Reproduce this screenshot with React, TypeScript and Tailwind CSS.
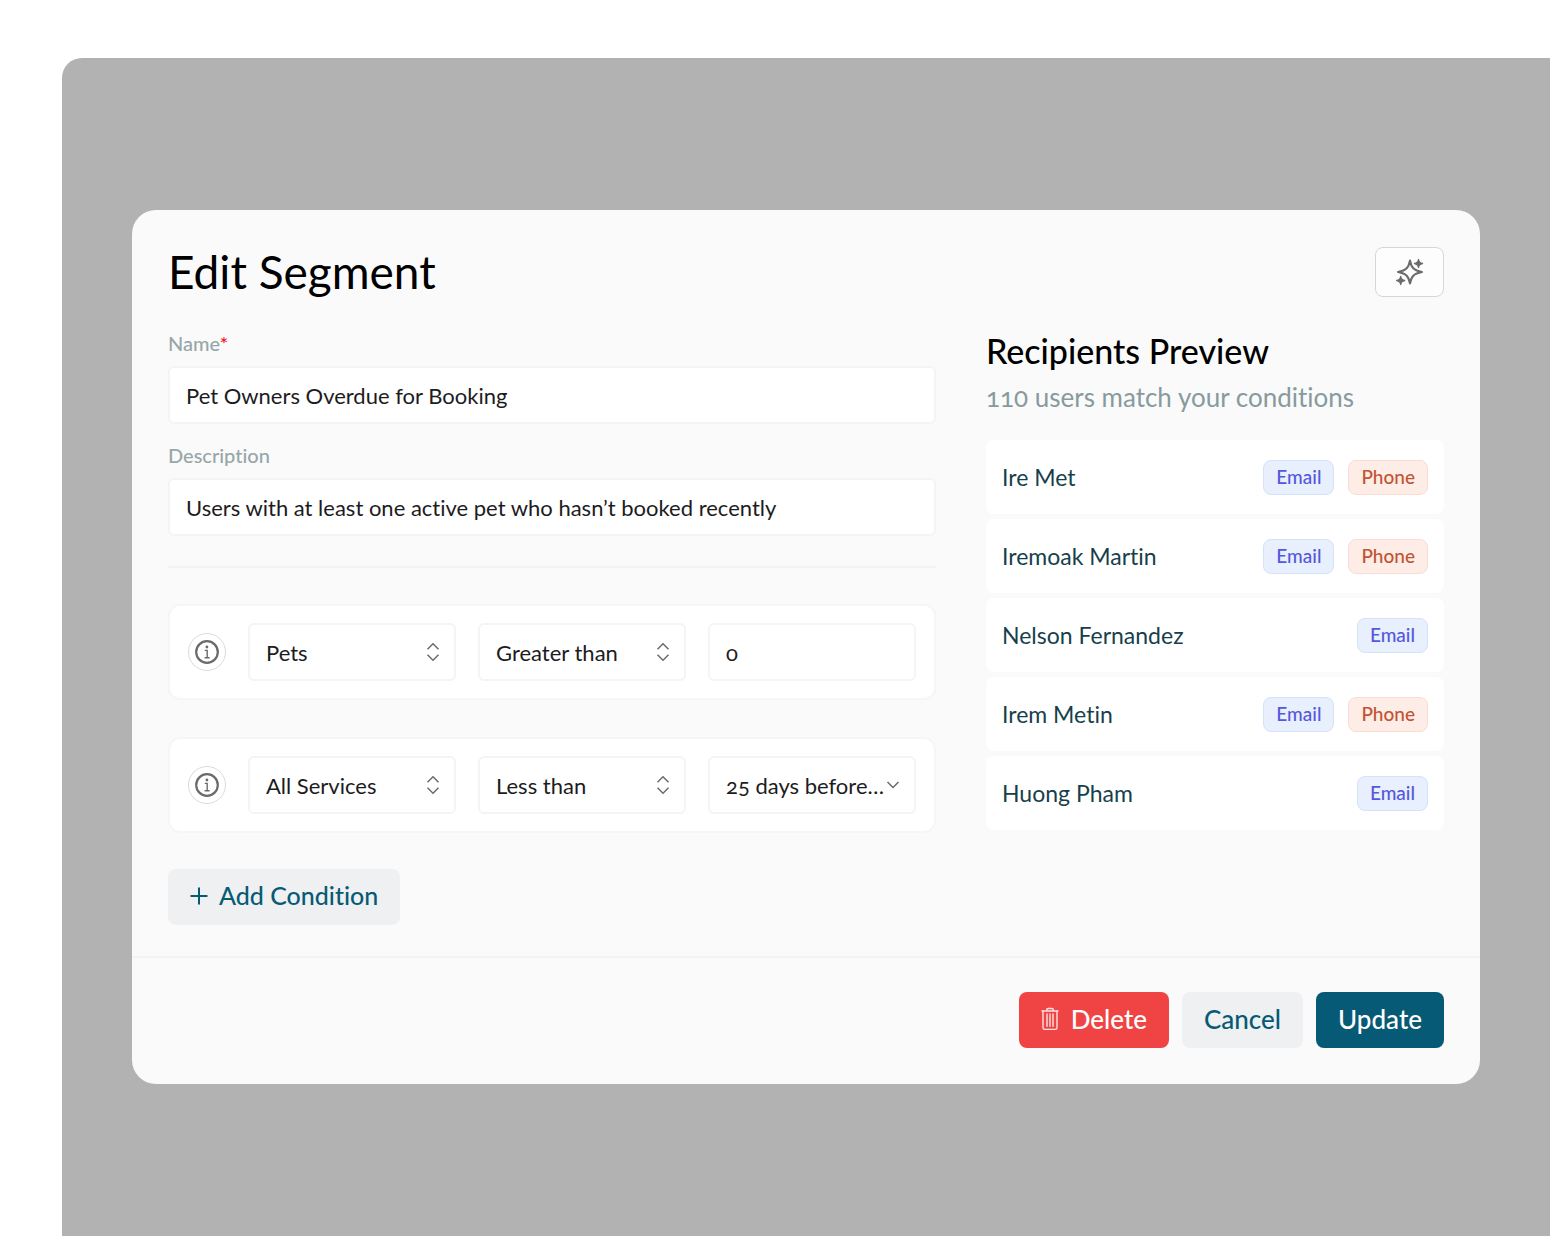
import React, { useState } from "react";

interface Recipient {
  name: string;
  channels: ("Email" | "Phone")[];
}

interface ConditionProps {
  field: string;
  operator: string;
  children: React.ReactNode;
}

const recipients: Recipient[] = [
  { name: "Ire Met", channels: ["Email", "Phone"] },
  { name: "Iremoak Martin", channels: ["Email", "Phone"] },
  { name: "Nelson Fernandez", channels: ["Email"] },
  { name: "Irem Metin", channels: ["Email", "Phone"] },
  { name: "Huong Pham", channels: ["Email"] },
];

const fields = ["Pets", "All Services"];
const operators = ["Greater than", "Less than"];

const channelStyles = {
  Email: "border-[#d5e2fb] bg-[#e8effd] text-[#5558dc]",
  Phone: "border-[#fbdcd2] bg-[#feece7] text-[#c05433]",
};

const boxStyles =
  "h-[58px] w-full rounded-md border-2 border-[#f4f4f5] bg-white px-4 text-[22px] text-[#1c1c1e] outline-none focus:border-[#065a75]";

const SparklesIcon = () => (
  <svg
    width="30"
    height="30"
    viewBox="0 0 30 30"
    fill="none"
    stroke="#6b6b6b"
    strokeWidth="2"
    strokeLinejoin="round"
    strokeLinecap="round"
  >
    <path d="M15 3.5C16.3 10.5 18.5 13.4 27 15C18.5 16.6 16.3 19.5 15 26.5C13.7 19.5 11.5 16.6 3 15C11.5 13.4 13.7 10.5 15 3.5Z" />
    <path
      d="M23.5 2.5C23.9 5.3 24.7 6.1 27.5 6.5C24.7 6.9 23.9 7.7 23.5 10.5C23.1 7.7 22.3 6.9 19.5 6.5C22.3 6.1 23.1 5.3 23.5 2.5Z"
      fill="#6b6b6b"
      strokeWidth="1.3"
    />
    <path
      d="M5.7 19.5C6.1 22.3 6.9 23.1 9.7 23.5C6.9 23.9 6.1 24.7 5.7 27.5C5.3 24.7 4.5 23.9 1.7 23.5C4.5 23.1 5.3 22.3 5.7 19.5Z"
      fill="#6b6b6b"
      strokeWidth="1.3"
    />
  </svg>
);

const InfoIcon = () => (
  <svg width="24" height="24" viewBox="0 0 24 24" fill="none" stroke="#6b6b6b">
    <circle cx="12" cy="12" r="10.8" strokeWidth="2.2" />
    <circle cx="11.9" cy="7" r="1.4" fill="#6b6b6b" stroke="none" />
    <path d="M9.8 10.4H12.2V17.6M9.6 17.8H14.6" strokeWidth="1.4" />
  </svg>
);

const UpDownIcon = () => (
  <svg width="14" height="20" viewBox="0 0 14 20" fill="none" stroke="#6b6b6b" strokeWidth="1.5">
    <path d="M1.5 7.2L7 1.7L12.5 7.2M1.5 12.8L7 18.3L12.5 12.8" />
  </svg>
);

const DownIcon = () => (
  <svg width="14" height="10" viewBox="0 0 14 10" fill="none" stroke="#6b6b6b" strokeWidth="1.5">
    <path d="M1.5 2L7 7.5L12.5 2" />
  </svg>
);

const PlusIcon = () => (
  <svg width="18" height="18" viewBox="0 0 18 18" stroke="#065a75" strokeWidth="2">
    <path d="M9 0.5V17.5M0.5 9H17.5" />
  </svg>
);

const TrashIcon = () => (
  <svg
    width="18"
    height="24"
    viewBox="0 0 18 24"
    fill="none"
    stroke="#ffe3e3"
    strokeWidth="1.4"
    strokeLinejoin="round"
    strokeLinecap="round"
  >
    <path d="M1 4H17M5.8 4V2.6C5.8 1.8 6.3 1.5 7 1.5H11C11.7 1.5 12.2 1.8 12.2 2.6V4" />
    <path d="M2 4V20.6C2 21.8 2.6 22.4 3.7 22.4H14.3C15.4 22.4 16 21.8 16 20.6V4" />
    <path d="M6 7V19.2M9 7V19.2M12 7V19.2" />
  </svg>
);

const SelectBox: React.FC<{ label: string; value: string; options: string[]; single?: boolean }> = ({
  label,
  value,
  options,
  single,
}) => {
  const [selected, setSelected] = useState<string>(value);

  return (
    <div className="relative min-w-0 flex-1">
      <select
        aria-label={label}
        value={selected}
        onChange={(e) => setSelected(e.target.value)}
        className={`${boxStyles} appearance-none pr-6`}
      >
        {options.map((option) => (
          <option key={option}>{option}</option>
        ))}
      </select>
      <span className="pointer-events-none absolute inset-y-0 right-4 flex items-center">
        {single ? <DownIcon /> : <UpDownIcon />}
      </span>
    </div>
  );
};

const Condition: React.FC<ConditionProps> = ({ field, operator, children }) => (
  <div className="flex items-center gap-[22px] rounded-xl border-2 border-[#f6f6f7] bg-white px-[18px] py-[17px]">
    <button
      type="button"
      aria-label="About this condition"
      className="flex h-[38px] w-[38px] shrink-0 items-center justify-center rounded-full border border-[#d9dcdc]"
    >
      <InfoIcon />
    </button>
    <SelectBox label="Field" value={field} options={fields} />
    <SelectBox label="Operator" value={operator} options={operators} />
    {children}
  </div>
);

const App: React.FC = () => {
  const [name, setName] = useState<string>("Pet Owners Overdue for Booking");
  const [description, setDescription] = useState<string>(
    "Users with at least one active pet who hasn’t booked recently"
  );
  const [petCount, setPetCount] = useState<string>("0");

  return (
    <div className="flex min-h-screen bg-white pt-[58px] pl-[62px] font-['Lato',sans-serif] [font-variant-ligatures:none] [font-variant-numeric:oldstyle-nums]">
      <main className="flex-1 rounded-tl-[20px] bg-[#b2b2b2] px-[70px] py-[152px]">
        <form
          className="rounded-3xl bg-[#fafafa]"
          onSubmit={(e) => e.preventDefault()}
        >
          <div className="px-9 pt-9 pb-[31px]">
            <div className="flex items-center justify-between">
              <h1 className="text-[46px] leading-[52px] text-black">Edit Segment</h1>
              <button
                type="button"
                aria-label="Generate with AI"
                className="flex h-[50px] w-[69px] items-center justify-center rounded-lg border border-[#d6d7d8] bg-[#fdfdfd]"
              >
                <SparklesIcon />
              </button>
            </div>

            <div className="mt-[33px] grid grid-cols-[1fr_458px] gap-[50px]">
              <section>
                <label htmlFor="name" className="block text-xl leading-6 font-medium text-[#97a6a7]">
                  Name<span className="text-[#f01818]">*</span>
                </label>
                <input
                  id="name"
                  value={name}
                  onChange={(e) => setName(e.target.value)}
                  className={`${boxStyles} mt-[11px]`}
                />
                <label
                  htmlFor="description"
                  className="mt-[19px] block text-xl leading-6 font-medium text-[#97a6a7]"
                >
                  Description
                </label>
                <input
                  id="description"
                  value={description}
                  onChange={(e) => setDescription(e.target.value)}
                  className={`${boxStyles} mt-[11px]`}
                />

                <hr className="mt-[30px] border-t-2 border-[#f2f3f3]" />

                <div className="mt-9 flex flex-col gap-[37px]">
                  <Condition field="Pets" operator="Greater than">
                    <div className="min-w-0 flex-1">
                      <input
                        aria-label="Value"
                        value={petCount}
                        onChange={(e) => setPetCount(e.target.value)}
                        className={boxStyles}
                      />
                    </div>
                  </Condition>
                  <Condition field="All Services" operator="Less than">
                    <SelectBox label="Value" value="25 days before…" options={["25 days before…"]} single />
                  </Condition>
                </div>

                <button
                  type="button"
                  className="mt-9 flex h-14 items-center gap-[11px] rounded-lg bg-[#eff0f2] px-[22px] pb-[2px] text-[25px] font-medium text-[#065a75]"
                >
                  <PlusIcon />
                  Add Condition
                </button>
              </section>

              <section>
                <h2 className="text-[34px] leading-10 font-medium text-black">Recipients Preview</h2>
                <p className="mt-[6px] text-[26px] leading-10 text-[#879a9d]">
                  110 users match your conditions
                </p>
                <ul className="mt-[23px] flex flex-col gap-[5px]">
                  {recipients.map((recipient) => (
                    <li
                      key={recipient.name}
                      className="flex h-[74px] items-center justify-between rounded-lg bg-white px-4"
                    >
                      <span className="text-[23px] text-[#173f4b]">{recipient.name}</span>
                      <span className="flex gap-[14px]">
                        {recipient.channels.map((channel) => (
                          <span
                            key={channel}
                            className={`flex h-[35px] items-center rounded-lg border px-3 text-[19px] font-medium ${channelStyles[channel]}`}
                          >
                            {channel}
                          </span>
                        ))}
                      </span>
                    </li>
                  ))}
                </ul>
              </section>
            </div>
          </div>

          <footer className="flex justify-end gap-[13px] border-t-2 border-[#f2f3f3] px-9 pt-[34px] pb-9 text-[26px] font-medium">
            <button
              type="button"
              className="flex h-14 items-center gap-3 rounded-lg bg-[#f04444] px-[22px] pb-[2px] text-white"
            >
              <TrashIcon />
              Delete
            </button>
            <button type="button" className="h-14 rounded-lg bg-[#eff0f2] px-[22px] pb-[2px] text-[#065a75]">
              Cancel
            </button>
            <button type="submit" className="h-14 rounded-lg bg-[#065a75] px-[22px] pb-[2px] text-white">
              Update
            </button>
          </footer>
        </form>
      </main>
    </div>
  );
};

export default App;
